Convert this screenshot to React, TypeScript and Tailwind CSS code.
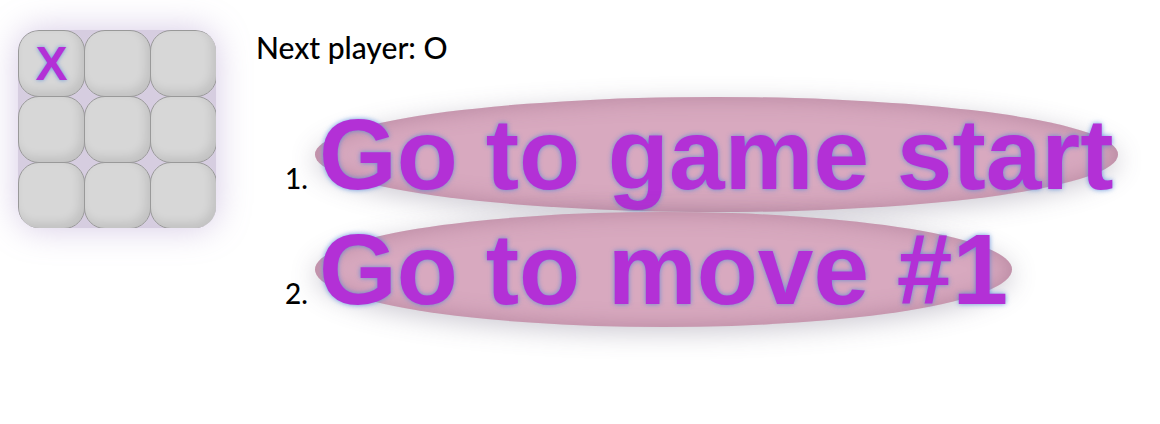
const SQUARES = ['X', null, null, null, null, null, null, null, null]
const MOVES = ['Go to game start', 'Go to move #1']

function Square({ value }: { value: string | null }) {
  return (
    <button
      className="w-[67px] h-[67px] -mr-px -mb-px border-[1.5px] border-[#999] rounded-[21px] bg-[#d7d7d7] shadow-[inset_-4px_-5px_10px_rgba(0,0,0,0.1)] flex items-center justify-center text-[48px] font-bold leading-none text-[#b330d6] [text-shadow:0_0_4px_rgba(70,130,220,0.75)]"
      style={{ fontFamily: '"Liberation Sans", Arial, sans-serif' }}
    >
      {value}
    </button>
  )
}

export default function App() {
  return (
    <div className="flex items-start pl-[18px] pt-[30px] bg-white min-h-[424px]" style={{ fontFamily: 'Lato, "Noto Sans", sans-serif' }}>
      {/* Board */}
      <div className="grid grid-cols-3 w-fit overflow-hidden rounded-[21px] bg-[#d6cde0] shadow-[0_0_34px_rgba(150,120,190,0.4)]">
        {SQUARES.map((v, i) => (
          <Square key={i} value={v} />
        ))}
      </div>
      {/* Info */}
      <div className="ml-10 -mt-[2px]">
        <div className="text-[30px] leading-[38px] font-medium text-black">Next player: O</div>
        <ol className="list-decimal list-outside pl-[59px] mt-[31px] text-[28px] leading-[36px] font-medium text-black">
          {MOVES.map((m) => (
            <li key={m}>
              <button
                className="inline-block px-1 rounded-[50%] bg-[#d8a9bf] text-[100px] font-bold text-[#b330d6] [text-shadow:0_0_5px_rgba(70,130,220,0.8)] shadow-[inset_0_0_22px_rgba(140,90,120,0.45),0_6px_26px_rgba(90,80,110,0.3)]"
                style={{ fontFamily: '"Liberation Sans", Arial, sans-serif', lineHeight: 'normal' }}
              >
                {m}
              </button>
            </li>
          ))}
        </ol>
      </div>
    </div>
  )
}
